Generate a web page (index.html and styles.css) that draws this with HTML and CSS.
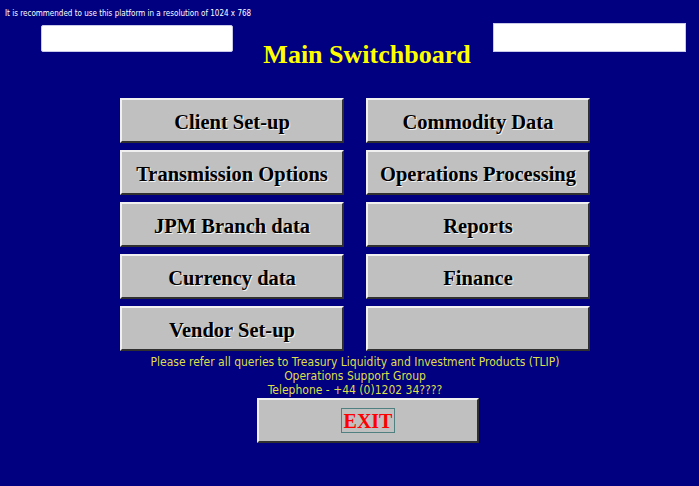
FILE: index.html
```html
<!DOCTYPE html>
<html>
<head>
<meta charset="utf-8">
<link rel="stylesheet" href="styles.css">
</head>
<body>
<div class="page">
  <div class="notice">It is recommended to use this platform in a resolution of 1024 x 768</div>
  <div class="header">
    <div class="box box-left"></div>
    <h1 class="title">Main Switchboard</h1>
    <div class="box box-right"></div>
  </div>
  <div class="grid">
    <div class="btn">Client Set-up</div>
    <div class="btn">Commodity Data</div>
    <div class="btn">Transmission Options</div>
    <div class="btn">Operations Processing</div>
    <div class="btn">JPM Branch data</div>
    <div class="btn">Reports</div>
    <div class="btn">Currency data</div>
    <div class="btn">Finance</div>
    <div class="btn">Vendor Set-up</div>
    <div class="btn"></div>
  </div>
  <div class="footer">
    <div>Please refer all queries to Treasury Liquidity and Investment Products (TLIP)</div>
    <div>Operations Support Group</div>
    <div>Telephone - +44 (0)1202 34????</div>
  </div>
  <div class="exit-row">
    <div class="btn exit"><span class="exit-label">EXIT</span></div>
  </div>
</div>
</body>
</html>
```
FILE: styles.css
```css
html, body {
  margin: 0;
  padding: 0;
  background: #000080;
}
.page {
  width: 699px;
  height: 486px;
  background: #000080;
  overflow: hidden;
}
.notice {
  font-family: "DejaVu Sans Condensed", "DejaVu Sans", sans-serif;
  font-size: 8px;
  color: #ffffff;
  padding: 9px 0 0 5px;
  line-height: 10px;
  height: 10px;
}
.header {
  display: flex;
  align-items: flex-start;
  height: 79px;
}
.box {
  background: #ffffff;
  border: 1px solid #c8c8e8;
  box-sizing: border-box;
}
.box-left {
  margin: 6px 0 0 41px;
  width: 192px;
  height: 27px;
  border-radius: 2px;
}
.box-right {
  margin: 4px 0 0 0;
  width: 193px;
  height: 29px;
}
.title {
  margin: 22px 0 0 0;
  width: 260px;
  padding-left: 8px;
  box-sizing: border-box;
  text-align: center;
  font-family: "Liberation Serif", serif;
  font-weight: bold;
  font-size: 26px;
  line-height: 28px;
  color: #ffff00;
}
.grid {
  display: grid;
  grid-template-columns: 224px 224px;
  column-gap: 22px;
  row-gap: 7px;
  margin-left: 120px;
}
.btn {
  box-sizing: border-box;
  height: 45px;
  padding-top: 3px;
  background: #c0c0c0;
  border-style: solid;
  border-width: 2px;
  border-color: #f0f0f0 #303030 #303030 #f0f0f0;
  display: flex;
  align-items: center;
  justify-content: center;
  font-family: "Liberation Serif", serif;
  font-weight: bold;
  font-size: 20.5px;
  color: #000000;
  text-shadow: 1px 1px 0 #f4f4f4;
}
.footer {
  margin-top: 4px;
  width: 710px;
  text-align: center;
  font-family: "DejaVu Sans Condensed", "DejaVu Sans", sans-serif;
  font-size: 12px;
  line-height: 14px;
  color: #dede4a;
}
.exit-row {
  margin-top: 1px;
  padding-left: 257px;
}
.exit {
  width: 222px;
  height: 45px;
  padding-top: 0;
}
.exit-label {
  color: #ff0000;
  font-size: 20px;
  text-shadow: none;
  border: 1px solid #508080;
  padding: 1px 2px 0 2px;
  line-height: 22px;
}
```
